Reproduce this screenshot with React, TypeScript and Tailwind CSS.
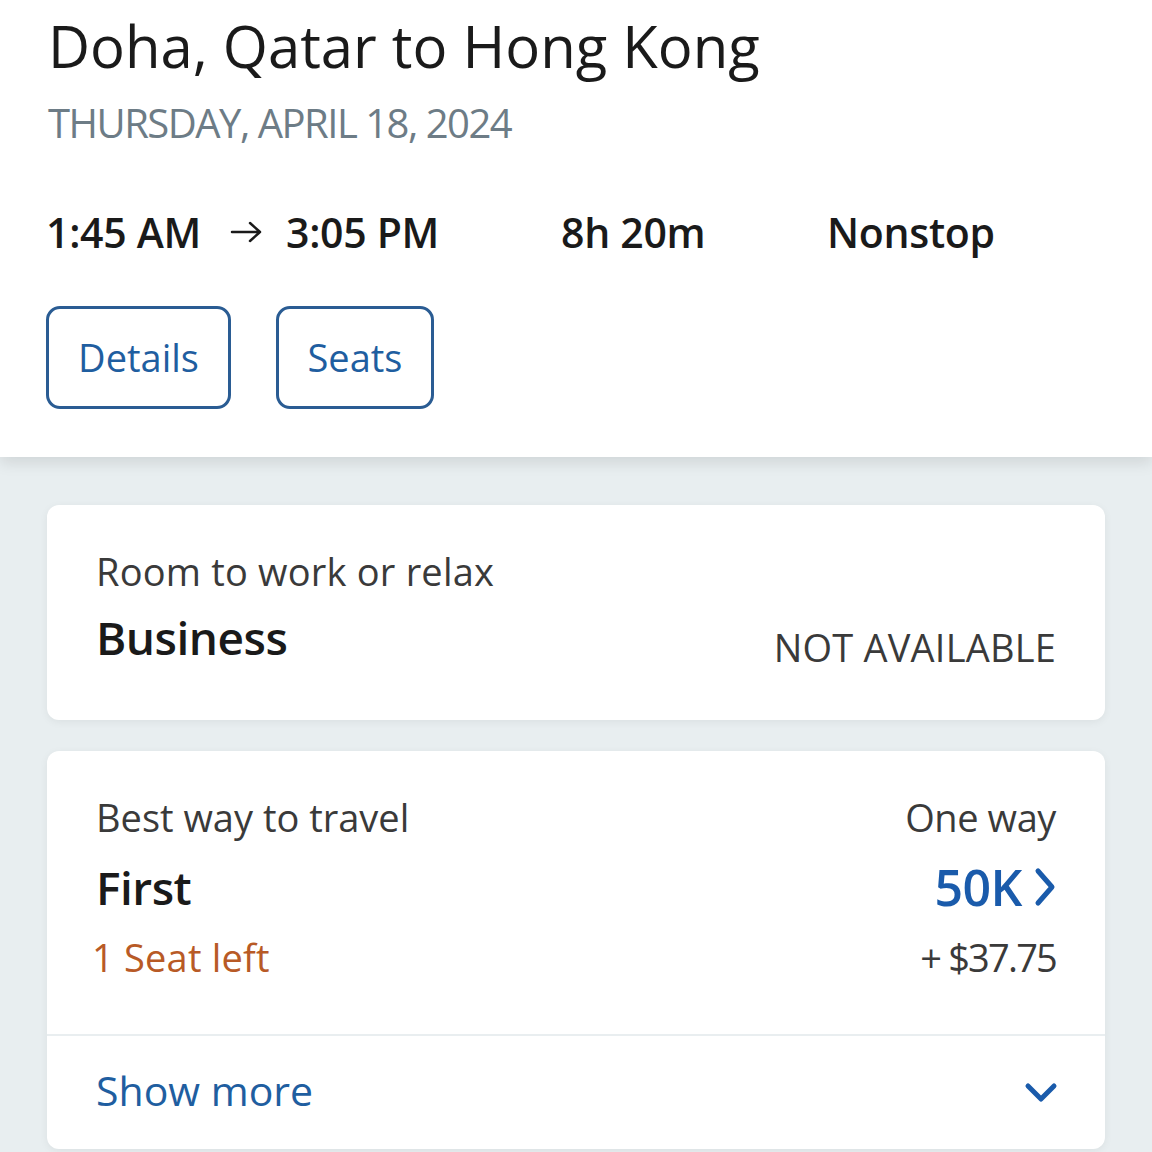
import React from "react";

const font = { fontFamily: '"Open Sans", "Noto Sans", sans-serif' };

export default function App() {
  return (
    <div className="w-[1152px] h-[1152px] overflow-hidden bg-[#e8eef0]" style={font}>
      <div className="bg-white h-[457px] pl-[48px] pt-[10px] shadow-[0_6px_14px_rgba(0,0,0,0.10)] relative z-10">
        <h1 className="text-[58px] leading-[72px] text-[#1a1a1a] tracking-[0px] font-normal">Doha, Qatar to Hong Kong</h1>
        <div className="mt-[17px] text-[40px] leading-[48px] text-[#6d7c86] tracking-[-1.5px] uppercase">Thursday, April 18, 2024</div>
        <div className="mt-[61px] flex items-center text-[41px] leading-[48px] font-semibold text-[#1a1a1a] tracking-[-0.3px]">
          <span className="w-[168px] -ml-[2px] mr-[2px]">1:45 AM</span>
          <svg width="34" height="24" viewBox="0 0 34 24" className="ml-[14px] mr-[22px]">
            <path d="M2 12 H30 M20 3 L30 12 L20 21" stroke="#1a1a1a" strokeWidth="2.5" fill="none" strokeLinecap="round" strokeLinejoin="round" />
          </svg>
          <span className="w-[275px]">3:05 PM</span>
          <span className="w-[266px]">8h 20m</span>
          <span>Nonstop</span>
        </div>
        <div className="mt-[50px] flex gap-[45px] -ml-[2px]">
          <button className="w-[185px] h-[103px] border-[3px] border-[#2a5c93] rounded-[14px] text-[38px] text-[#1f5ea0] tracking-[0px]" style={font}>Details</button>
          <button className="w-[158px] h-[103px] border-[3px] border-[#2a5c93] rounded-[14px] text-[38px] text-[#1f5ea0] tracking-[0px]" style={font}>Seats</button>
        </div>
      </div>

      <div className="px-[47px] pt-[48px] flex flex-col gap-[31px]">
        <div className="bg-white rounded-[12px] h-[215px] px-[49px] pt-[42px] shadow-[0_2px_8px_rgba(0,0,0,0.06)]">
          <div className="text-[38px] leading-[48px] text-[#3a3a3a] tracking-[0.2px]">Room to work or relax</div>
          <div className="flex justify-between items-end mt-[14px]">
            <div className="text-[46px] leading-[56px] font-semibold text-[#1a1a1a] tracking-[-0.5px]">Business</div>
            <div className="text-[38px] leading-[48px] text-[#3a3a3a] tracking-[0.2px] -mb-[6px]">NOT AVAILABLE</div>
          </div>
        </div>

        <div className="bg-white rounded-[12px] h-[398px] shadow-[0_2px_8px_rgba(0,0,0,0.06)] flex flex-col">
          <div className="px-[49px] pt-[42px] h-[283px]">
            <div className="flex justify-between">
              <div className="text-[38px] leading-[48px] text-[#3a3a3a] tracking-[0px]">Best way to travel</div>
              <div className="text-[38px] leading-[48px] text-[#3a3a3a] tracking-[-0.4px]">One way</div>
            </div>
            <div className="flex justify-between items-center mt-[18px]">
              <div className="text-[46px] leading-[56px] font-semibold text-[#1a1a1a] tracking-[-0.5px]">First</div>
              <div className="flex items-center gap-[12px] text-[50px] leading-[56px] font-semibold text-[#1a5bab] tracking-[-0.5px]">
                <span>50K</span>
                <svg width="22" height="40" viewBox="0 0 22 40">
                  <path d="M4 4 L18 20 L4 36" stroke="#1a5bab" strokeWidth="5" fill="none" strokeLinecap="round" strokeLinejoin="round" />
                </svg>
              </div>
            </div>
            <div className="flex justify-between mt-[18px]">
              <div className="text-[38px] leading-[48px] text-[#b85a26] tracking-[0.2px] -ml-[4px]">1 Seat left</div>
              <div className="text-[38px] leading-[48px] text-[#3a3a3a] tracking-[-1.8px]">+ $37.75</div>
            </div>
          </div>
          <div className="h-[2px] bg-[#e9eef0]" />
          <div className="flex-1 px-[49px] flex justify-between items-center">
            <div className="text-[41px] leading-[48px] text-[#1f5ea0] tracking-[0px] -mt-[6px]">Show more</div>
            <svg width="34" height="22" viewBox="0 0 34 22" className="-mr-[2px]">
              <path d="M4 4 L17 17 L30 4" stroke="#1a5bab" strokeWidth="5" fill="none" strokeLinecap="round" strokeLinejoin="round" />
            </svg>
          </div>
        </div>
      </div>
    </div>
  );
}
